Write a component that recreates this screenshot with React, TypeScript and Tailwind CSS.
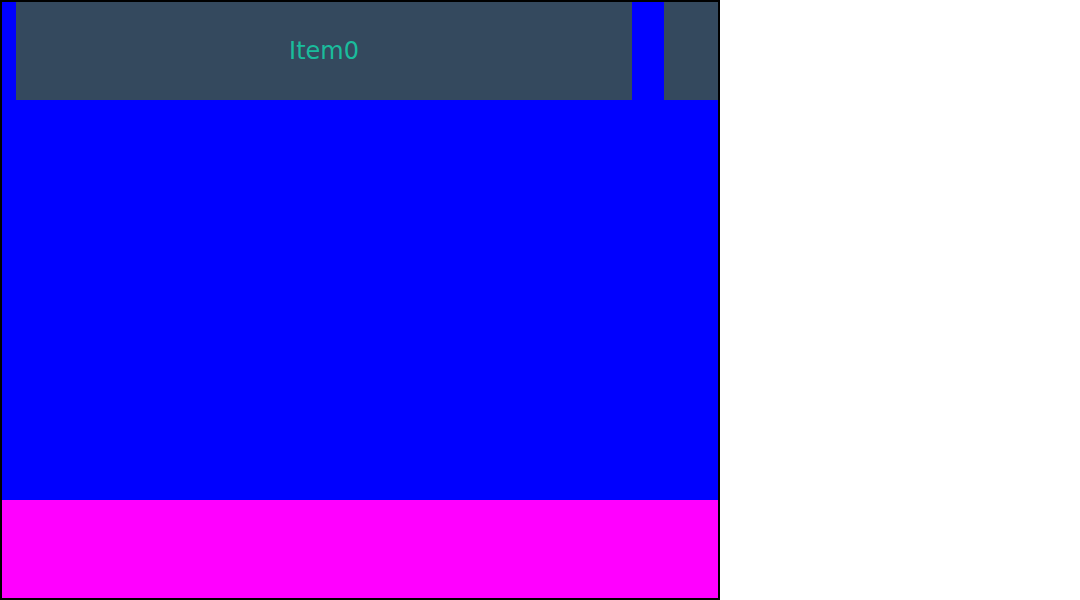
export default function App() {
  return (
    <div className="w-[720px] h-[600px] border-2 border-black bg-[#0000ff] flex flex-col font-['DejaVu_Sans',sans-serif]">
      <div className="flex gap-8 pl-[14px] h-[98px] shrink-0 overflow-hidden">
        <div className="w-[616px] shrink-0 bg-[#34495e] flex items-center justify-center text-[#1abc9c] text-2xl">
          Item0
        </div>
        {/* next slide, only its edge shows */}
        <div className="w-[616px] shrink-0 bg-[#34495e]" />
      </div>
      <div className="flex-1" />
      <div className="h-[98px] shrink-0 bg-[#ff00ff]" />
    </div>
  )
}
